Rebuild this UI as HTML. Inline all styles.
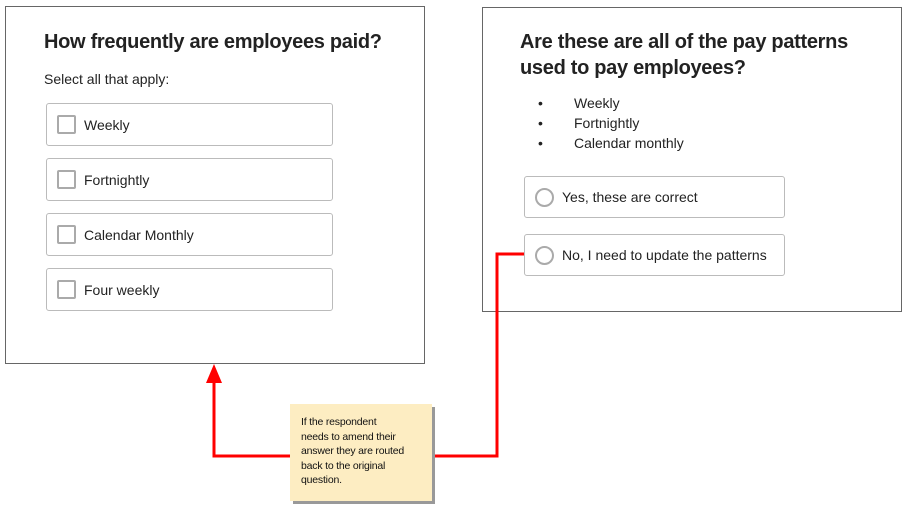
<!DOCTYPE html>
<html><head><style>
body{margin:0;width:907px;height:510px;background:#fff;font-family:"Liberation Sans",sans-serif;color:#222;position:relative;overflow:hidden}
.panel{position:absolute;border:1px solid #666;background:#fff;box-sizing:border-box}
h1{position:absolute;margin:0;font-size:20px;font-weight:bold;letter-spacing:-0.3px;line-height:26px;color:#222}
.opt{position:absolute;border:1px solid #bbb;border-radius:3px;box-sizing:border-box;font-size:14px;display:flex;align-items:center}
.cb{width:15px;height:15px;border:2px solid #aaa;border-radius:2px;margin:0 8px 0 10px}
.rd{width:15px;height:15px;border:2px solid #aaa;border-radius:50%;margin:0 8px 0 10px}
.t{position:absolute;font-size:14px}
</style></head><body>
<div class="panel" style="left:5px;top:6px;width:420px;height:358px"></div>
<h1 style="left:44px;top:29px">How frequently are employees paid?</h1>
<div class="t" style="left:44px;top:71px">Select all that apply:</div>
<div class="opt" style="left:46px;top:103px;width:287px;height:43px"><div class="cb"></div>Weekly</div>
<div class="opt" style="left:46px;top:158px;width:287px;height:43px"><div class="cb"></div>Fortnightly</div>
<div class="opt" style="left:46px;top:213px;width:287px;height:43px"><div class="cb"></div>Calendar Monthly</div>
<div class="opt" style="left:46px;top:268px;width:287px;height:43px"><div class="cb"></div>Four weekly</div>

<div class="panel" style="left:482px;top:7px;width:420px;height:305px"></div>
<h1 style="left:520px;top:29px;width:360px">Are these are all of the pay patterns used to pay employees?</h1>
<div class="t" style="left:538px;top:95px">•</div><div class="t" style="left:574px;top:95px">Weekly</div>
<div class="t" style="left:538px;top:115px">•</div><div class="t" style="left:574px;top:115px">Fortnightly</div>
<div class="t" style="left:538px;top:135px">•</div><div class="t" style="left:574px;top:135px">Calendar monthly</div>
<div class="opt" style="left:524px;top:176px;width:261px;height:42px"><div class="rd"></div>Yes, these are correct</div>
<div class="opt" style="left:524px;top:234px;width:261px;height:42px"><div class="rd"></div>No, I need to update the patterns</div>

<svg width="907" height="510" style="position:absolute;left:0;top:0">
<polyline points="290,456 214,456 214,380" fill="none" stroke="#f00" stroke-width="3"/>
<polygon points="206,383 222,383 214,364" fill="#f00"/>
<polyline points="432,456 497,456 497,254 524,254" fill="none" stroke="#f00" stroke-width="3"/>
</svg>
<div style="position:absolute;left:293px;top:407px;width:142px;height:97px;background:#999"></div>
<div style="position:absolute;left:290px;top:404px;width:142px;height:97px;background:#fdedc2;box-sizing:border-box;padding:11px 4px 0 11px;font-size:10.5px;line-height:14.5px;color:#111;letter-spacing:-0.2px;white-space:nowrap">If the respondent<br>needs to amend their<br>answer they are routed<br>back to the original<br>question.</div>
</body></html>
